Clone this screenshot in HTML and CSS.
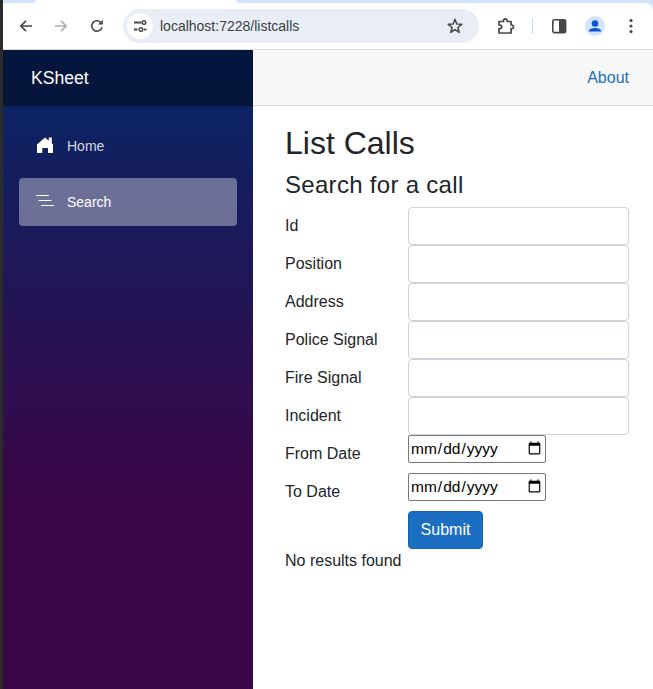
FILE: index.html
```html
<!DOCTYPE html>
<html>
<head>
  <meta charset="utf-8" />
  <title>List Calls</title>
  <link rel="stylesheet" href="styles.css">
</head>
<body>
  <div id="chrome">
    <div id="tabstrip"><span class="tab"></span></div>
    <div id="toolbar">
      <svg class="tool" width="16" height="16" viewBox="0 0 16 16"><path d="M14 8H3M8 2.800 2.800 8 8 13.200" fill="none" stroke="#474747" stroke-width="1.700"/></svg>
      <svg class="tool fwd" width="16" height="16" viewBox="0 0 16 16"><path d="M2 8h11M8 2.800 13.200 8 8 13.200" fill="none" stroke="#b0b0b0" stroke-width="1.700"/></svg>
      <svg class="tool reload" width="16" height="16" viewBox="0 0 16 16"><path d="M13 9.200A5.200 5.200 0 1 1 11.600 4.200L13.200 5.800" fill="none" stroke="#474747" stroke-width="1.600"/><path d="M13.800 1.800V6.600H9Z" fill="#474747"/></svg>
      <div id="omnibox">
        <span class="site-info">
          <svg width="14" height="14" viewBox="0 0 14 14"><path d="M1 3.500h7.500M1 10.500h3.500" stroke="#474747" stroke-width="1.800" fill="none"/><circle cx="11" cy="3.500" r="1.800" fill="none" stroke="#474747" stroke-width="1.400"/><circle cx="8" cy="10.500" r="1.800" fill="none" stroke="#474747" stroke-width="1.400"/><path d="M11 10.500h2.500" stroke="#474747" stroke-width="1.800"/></svg>
        </span>
        <span class="url">localhost:7228/listcalls</span>
        <svg class="star" width="18" height="18" viewBox="0 0 18 18"><path d="M9 2.300 10.800 7l5 .3-3.900 3.200 1.300 4.900L9 12.700l-4.200 2.700 1.300-4.900L2.200 7.300l5-.3Z" fill="none" stroke="#474747" stroke-width="1.500" stroke-linejoin="round"/></svg>
      </div>
      <svg class="ext" width="18" height="18" viewBox="0 0 18 18"><path d="M2 4.500h4.500V3.600a1.800 1.800 0 0 1 3.600 0v.9h4V8h.6a1.800 1.800 0 0 1 0 3.600h-.6V16H2v-4.400h0.900a1.800 1.800 0 0 0 0-3.600H2Z" fill="none" stroke="#474747" stroke-width="1.700" stroke-linejoin="round"/></svg>
      <span class="sep"></span>
      <svg class="side" width="16" height="16" viewBox="0 0 16 16"><rect x="1.800" y="1.800" width="12.800" height="12.800" rx="1.500" fill="none" stroke="#474747" stroke-width="1.600"/><rect x="8" y="2" width="6.500" height="12.500" fill="#474747"/></svg>
      <span class="avatar">
        <svg width="20" height="20" viewBox="0 0 20 20"><circle cx="10" cy="7.500" r="3.300" fill="#0b57d0"/><path d="M3.800 15.500c0-2.600 3.600-3.600 6.200-3.600s6.200 1 6.200 3.600Z" fill="#0b57d0"/></svg>
      </span>
      <svg class="menu" width="4" height="16" viewBox="0 0 4 16"><circle cx="2" cy="2.500" r="1.600" fill="#474747"/><circle cx="2" cy="8" r="1.600" fill="#474747"/><circle cx="2" cy="13.500" r="1.600" fill="#474747"/></svg>
    </div>
  </div>

  <div id="app">
    <div id="sidebar">
      <div class="brand">KSheet</div>
      <nav class="nav">
        <a class="nav-link">
          <svg width="20" height="20" viewBox="0 0 20 20"><path d="M10 1.500 13.800 4.800V1.500H16.800V7.300L18 8.500V17H13V12H7.300V17H2V8.500Z" fill="#fff"/></svg>
          <span>Home</span>
        </a>
        <a class="nav-link active">
          <svg width="20" height="20" viewBox="0 0 20 20"><path d="M1 3.500H14M3.500 8.500H16.500M6 13.500H19" stroke="#fff" stroke-width="1" fill="none"/></svg>
          <span>Search</span>
        </a>
      </nav>
    </div>
    <div id="main">
      <div class="top-row"><a>About</a></div>
      <div class="content">
        <h1>List Calls</h1>
        <h2>Search for a call</h2>
        <form class="search-form">
          <label>Id</label><input class="form-control" type="text">
          <label>Position</label><input class="form-control" type="text">
          <label>Address</label><input class="form-control" type="text">
          <label>Police Signal</label><input class="form-control" type="text">
          <label>Fire Signal</label><input class="form-control" type="text">
          <label>Incident</label><input class="form-control" type="text">
          <label>From Date</label><div class="date-cell"><input class="date" type="date"></div>
          <label>To Date</label><div class="date-cell"><input class="date" type="date"></div>
          <span></span><div><button class="btn" type="button">Submit</button></div>
        </form>
        <p class="empty">No results found</p>
      </div>
    </div>
  </div>
</body>
</html>
```

FILE: styles.css
```css
* {
  box-sizing: border-box;
}
html, body {
  height: 100%;
}
body {
  margin: 0;
  height: 689px;
  overflow: hidden;
  display: flex;
  flex-direction: column;
  border-left: 3px solid #2b2b2b;
  font-family: 'Liberation Sans', Arial, sans-serif;
  font-size: 16px;
  color: #212529;
  background: #fff;
}
#chrome {
  height: 50px;
  flex: none;
  background: #d3e3fd;
  border-bottom: 1px solid #dcdcdc;
}
#tabstrip {
  height: 3px;
  padding-left: 32px;
}
.tab {
  display: block;
  width: 202px;
  height: 3px;
  background: #fff;
  border-radius: 3px 3px 0 0;
}
#toolbar {
  height: 46px;
  display: flex;
  align-items: center;
  padding-left: 15px;
  background: #fff;
  border-radius: 0 8px 0 0;
}
.fwd {
  margin-left: 19px;
}
.reload {
  margin-left: 20px;
}
#omnibox {
  margin-left: 18px;
  width: 356px;
  height: 34px;
  border-radius: 17px;
  background: #e9edf6;
  display: flex;
  align-items: center;
  padding-left: 4px;
}
.site-info {
  width: 26px;
  height: 26px;
  border-radius: 50%;
  background: #fff;
  display: flex;
  align-items: center;
  justify-content: center;
}
.url {
  margin-left: 7px;
  font-size: 14px;
  color: #3c4043;
}
.star {
  margin-left: auto;
  margin-right: 15px;
}
.ext {
  margin-left: 18px;
}
.sep {
  width: 1px;
  height: 16px;
  background: #c9dcf8;
  margin-left: 17px;
}
.side {
  margin-left: 18px;
}
.avatar {
  margin-left: 18px;
  width: 20px;
  height: 20px;
  border-radius: 50%;
  background: #d3e3fd;
  display: flex;
}
.menu {
  margin-left: 24px;
}
#app {
  flex: 1;
  display: flex;
  min-height: 0;
}
#sidebar {
  width: 250px;
  flex: none;
  background-image: linear-gradient(180deg, #052767 0%, #3a0647 70%);
  color: #fff;
}
.brand {
  height: 56px;
  display: flex;
  align-items: center;
  padding-left: 28px;
  font-size: 17.6px;
  background: rgba(0,0,0,0.4);
}
.nav {
  padding: 16px 16px 0;
  display: flex;
  flex-direction: column;
  gap: 8px;
}
.nav-link {
  height: 48px;
  display: flex;
  align-items: center;
  gap: 12px;
  padding-left: 16px;
  border-radius: 4px;
  font-size: 14px;
  color: #d7d7d7;
}
.nav-link.active {
  background: rgba(255,255,255,0.37);
  color: #fff;
}
#main {
  flex: 1;
  min-width: 0;
}
.top-row {
  height: 56px;
  background: #f7f7f7;
  border-bottom: 1px solid #d6d5d5;
  display: flex;
  align-items: center;
  justify-content: flex-end;
  padding-right: 24px;
}
.top-row a {
  color: #1b6ec2;
}
.content {
  padding: 18px 24px 0 32px;
}
h1 {
  margin: 0 0 8px;
  font-size: 32px;
  font-weight: 500;
  line-height: 38px;
}
h2 {
  margin: 0 0 8px;
  font-size: 24px;
  letter-spacing: 0.3px;
  font-weight: 500;
  line-height: 29px;
}
.search-form {
  display: grid;
  grid-template-columns: 123px 1fr;
  grid-auto-rows: 38px;
}
.search-form label {
  padding-top: 7px;
  line-height: 24px;
}
.form-control {
  display: block;
  width: 100%;
  height: 38px;
  border: 1px solid #ced4da;
  border-radius: 4px;
  background: #fff;
}
.date {
  display: block;
  width: 138px;
  height: 28px;
  font-family: 'Liberation Sans', Arial, sans-serif;
  font-size: 15.5px;
  color: #000;
  padding: 1px;
  border: 1px solid #767676;
  border-radius: 2px;
  background: #fff;
}
.btn {
  width: 75px;
  height: 38px;
  border: 1px solid #1861ac;
  border-radius: 4px;
  background: #1b6ec2;
  color: #fff;
  font-family: inherit;
  font-size: 16px;
}
.empty {
  margin: 0;
  line-height: 24px;
}
```
